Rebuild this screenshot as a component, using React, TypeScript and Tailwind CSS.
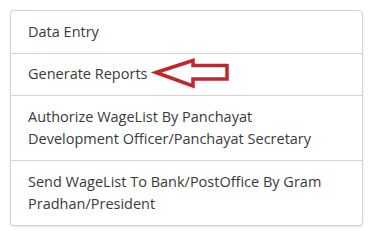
import React from "react";

const items = [
  ["Data Entry"],
  ["Generate Reports"],
  ["Authorize WageList By Panchayat", "Development Officer/Panchayat Secretary"],
  ["Send WageList To Bank/PostOffice By Gram", "Pradhan/President"],
];

export default function App() {
  return (
    <div className="w-[373px] h-[231px] bg-white p-[10px] pr-[10px]" style={{ fontFamily: '"Open Sans", "Noto Sans", sans-serif' }}>
      <div className="relative w-[353px] rounded-[4px] border border-[#d4d4d4] shadow-[0_1px_2px_rgba(0,0,0,0.12)] bg-white">
        {items.map((lines, i) => (
          <div
            key={i}
            className={`px-[17px] py-[9.5px] text-[14.5px] leading-[22.5px] text-[#3a3a3a] ${i > 0 ? "border-t border-[#d4d4d4]" : ""}`}
          >
            {lines.map((l, j) => (
              <div key={j}>{l}</div>
            ))}
          </div>
        ))}
        <svg className="absolute left-[139px] top-[44px]" width="85" height="38" viewBox="0 0 85 38">
          <polygon
            points="6,17.5 43,5.5 43,10.5 77,10.5 77,24 43,24 43,31"
            fill="white"
            stroke="#c1272d"
            strokeWidth="3.5"
            strokeLinejoin="miter"
          />
        </svg>
      </div>
    </div>
  );
}
